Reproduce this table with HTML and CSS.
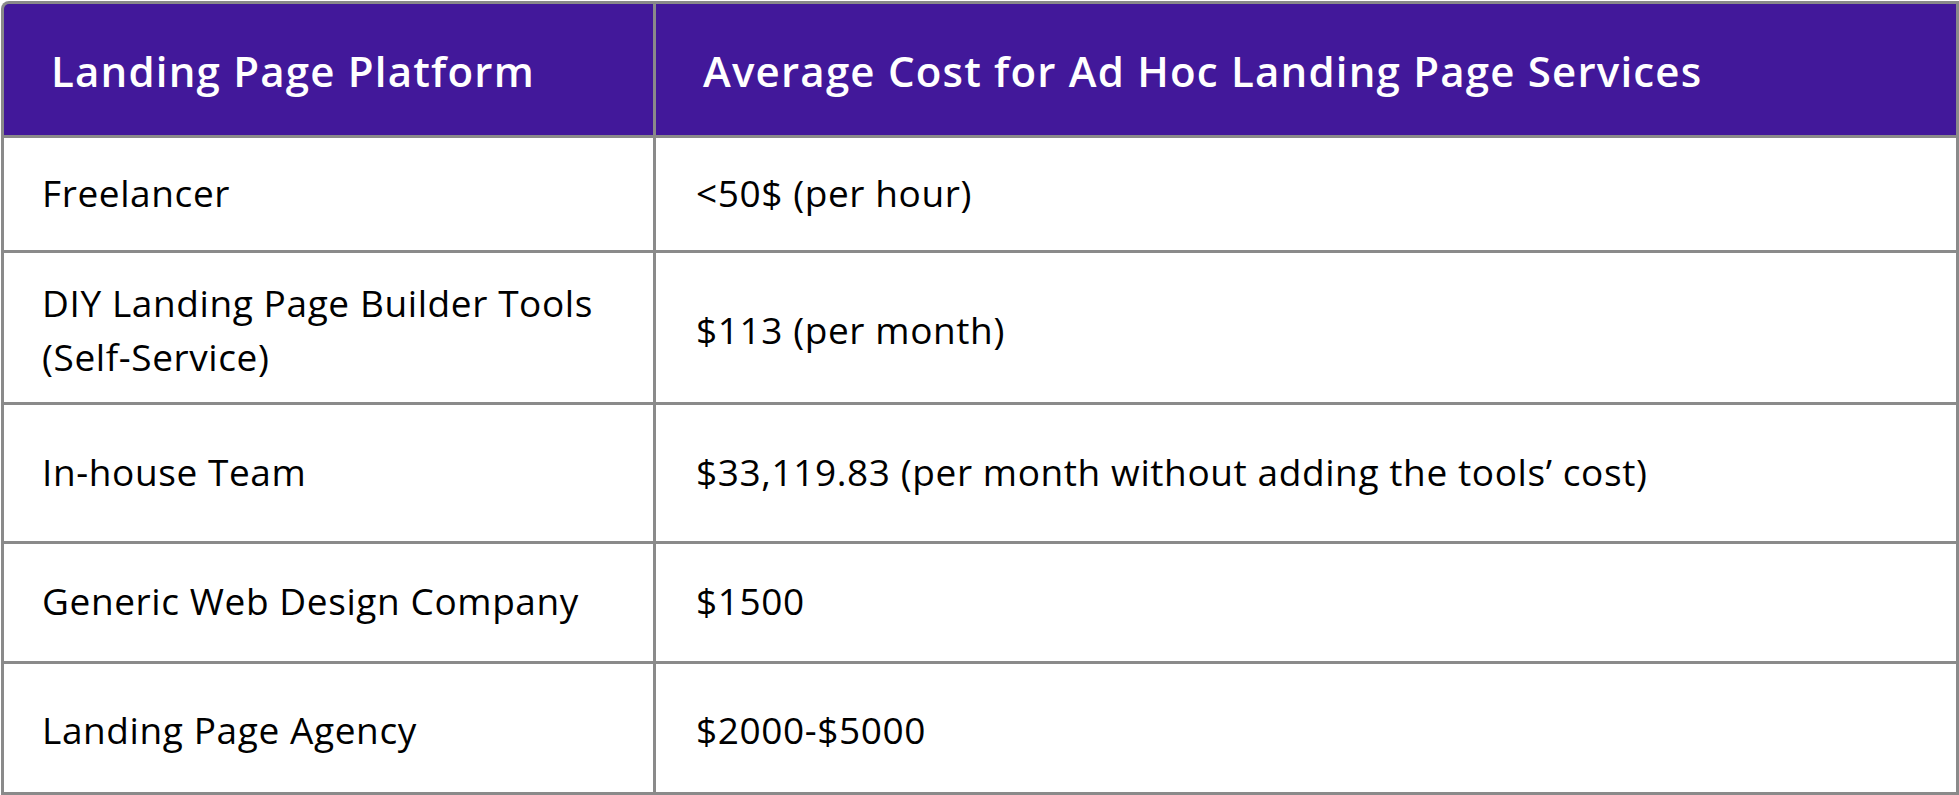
FILE: index.html
```html
<!DOCTYPE html>
<html lang="en">
<head>
<meta charset="utf-8">
<title>Landing Page Costs</title>
<link rel="stylesheet" href="styles.css">
</head>
<body>
<div class="cost-table">
  <div class="cell head first">Landing Page Platform</div>
  <div class="cell head second">Average Cost for Ad Hoc Landing Page Services</div>

  <div class="cell left">Freelancer</div>
  <div class="cell right">&lt;50$ (per hour)</div>

  <div class="cell left tall">DIY Landing Page Builder Tools (Self-Service)</div>
  <div class="cell right tall">$113 (per month)</div>

  <div class="cell left">In-house Team</div>
  <div class="cell right">$33,119.83 (per month without adding the tools’ cost)</div>

  <div class="cell left">Generic Web Design Company</div>
  <div class="cell right">$1500</div>

  <div class="cell left last">Landing Page Agency</div>
  <div class="cell right last">$2000-$5000</div>
</div>
</body>
</html>
```

FILE: styles.css
```css
html, body {
  margin: 0;
  padding: 0;
  background: #ffffff;
}

body {
  font-family: "Open Sans", "Noto Sans", sans-serif;
  color: #000000;
}

.cost-table {
  margin: 1px 0 0 1px;
  width: 1958px;
  height: 794px;
  box-sizing: border-box;
  padding: 3px;
  background: #8a8a8a;
  border-top-left-radius: 8px;
  display: grid;
  grid-template-columns: 649px 1fr;
  grid-template-rows: 131px 112px 149px 136px 117px 128px;
  gap: 3px;
}

.cell {
  background: #ffffff;
  display: flex;
  align-items: center;
  font-size: 37px;
  line-height: 54px;
  font-weight: 400;
  letter-spacing: 0.6px;
  padding-bottom: 3px;
}

.cell.left {
  padding-left: 38px;
  padding-right: 30px;
}

.cell.right {
  padding-left: 40px;
  padding-right: 40px;
}

.cell.tall {
  padding-top: 4px;
  padding-bottom: 0;
}

.cell.last {
  padding-top: 4px;
  padding-bottom: 0;
}

.cell.head {
  background: #42189a;
  color: #ffffff;
  font-weight: 600;
  font-size: 42px;
  letter-spacing: 1.2px;
  padding: 2px 40px 0 47px;
}

.cell.head.first {
  border-top-left-radius: 5px;
}
```
